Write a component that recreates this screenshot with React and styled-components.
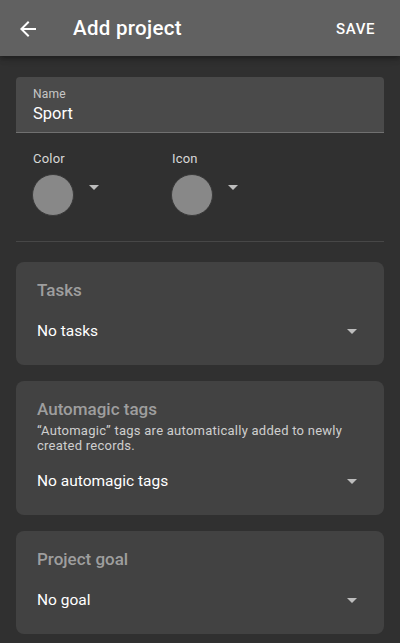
import React from "react";
import styled, { createGlobalStyle } from "styled-components";

const Global = createGlobalStyle`
  html, body { margin: 0; padding: 0; background: #303030; }
  body { font-family: Roboto, "Noto Sans", "Liberation Sans", sans-serif; -webkit-font-smoothing: antialiased; }
  * { box-sizing: border-box; }
`;

const Page = styled.div`
  width: 400px;
  min-height: 643px;
  background: #303030;
  color: #fff;
`;

const AppBar = styled.header`
  height: 56px;
  background: #616161;
  display: flex;
  align-items: center;
  padding: 0 25px 0 16px;
  box-shadow: 0 2px 4px -1px rgba(0,0,0,0.2), 0 4px 5px 0 rgba(0,0,0,0.14), 0 1px 10px 0 rgba(0,0,0,0.12);
  position: relative;
  z-index: 1;
`;

const IconButton = styled.button`
  width: 24px;
  height: 24px;
  padding: 0;
  border: 0;
  background: none;
  color: #fff;
  display: flex;
  align-items: center;
  justify-content: center;
  margin-top: 2px;
`;

const Title = styled.h1`
  margin: 0 0 0 33px;
  font-size: 20.5px;
  font-weight: 500;
  line-height: 24px;
  flex: 1;
  letter-spacing: 0.3px;
`;

const SaveButton = styled.button`
  border: 0;
  background: none;
  color: #fff;
  font-family: inherit;
  font-size: 15px;
  font-weight: 500;
  letter-spacing: 0.6px;
  padding: 0;
  margin-top: 2px;
`;

const Content = styled.main`
  padding: 21px 16px 16px;
  display: flex;
  flex-direction: column;
`;

const Field = styled.div`
  height: 56px;
  background: #4a4a4a;
  border-radius: 4px 4px 0 0;
  border-bottom: 1px solid #707070;
  padding: 9px 17px 0;
  display: flex;
  flex-direction: column;
`;

const FieldLabel = styled.label`
  font-size: 12px;
  line-height: 16px;
  color: rgba(255,255,255,0.7);
  letter-spacing: 0.2px;
`;

const FieldValue = styled.div`
  font-size: 16.5px;
  line-height: 22px;
  color: #fff;
  margin-top: 1px;
`;

const Pickers = styled.div`
  display: grid;
  grid-template-columns: 139px 139px;
  padding: 18px 0 0 16px;
`;

const Picker = styled.div`
  display: flex;
  flex-direction: column;
`;

const PickerLabel = styled.span`
  font-size: 13px;
  line-height: 16px;
  color: rgba(255,255,255,0.82);
  letter-spacing: 0.2px;
  margin-left: 1px;
`;

const PickerRow = styled.div`
  display: flex;
  align-items: flex-start;
  margin-top: 7px;
`;

const Swatch = styled.div`
  width: 42px;
  height: 42px;
  border-radius: 50%;
  background: #888888;
  border: 1px solid #3a3a3a;
`;

const Caret = styled.svg`
  width: 24px;
  height: 24px;
  flex: none;
  fill: ${p => p.$color || "#bdbdbd"};
`;

const PickerCaret = styled(Caret)`
  margin: 1px 0 0 ${p => p.$offset}px;
`;

const Divider = styled.hr`
  margin: 25px 0 20px;
  border: 0;
  height: 1px;
  background: #474747;
`;

const Cards = styled.div`
  display: flex;
  flex-direction: column;
  gap: 16px;
`;

const Card = styled.section`
  background: #424242;
  border-radius: 8px;
  padding: 16px 21px 22px;
  display: flex;
  flex-direction: column;
`;

const CardTitle = styled.h2`
  margin: 0;
  font-size: 17px;
  font-weight: 500;
  line-height: 24px;
  color: #9e9e9e;
`;

const CardDesc = styled.p`
  margin: 2px 0 0;
  font-size: 13px;
  line-height: 15px;
  color: rgba(255,255,255,0.75);
  letter-spacing: 0.25px;
`;

const SelectRow = styled.div`
  display: flex;
  align-items: center;
  justify-content: space-between;
  height: 24px;
  margin-top: ${p => p.$gap}px;
  font-size: 15.5px;
  color: #fff;
`;

const SelectCaret = styled(Caret)`
  margin-right: -1px;
`;

const ArrowDrop = ({ as: C = Caret, ...rest }) => (
  <C viewBox="0 0 24 24" {...rest}>
    <path d="M7 10l5 5 5-5z" />
  </C>
);

const BackIcon = () => (
  <svg width="24" height="24" viewBox="0 0 24 24" fill="#fff">
    <path d="M20 11H7.83l5.59-5.59L12 4l-8 8 8 8 1.41-1.41L7.83 13H20v-2z" />
  </svg>
);

const SelectCard = ({ title, desc, value, gap }) => (
  <Card>
    <CardTitle>{title}</CardTitle>
    {desc && <CardDesc>{desc}</CardDesc>}
    <SelectRow $gap={gap}>
      <span>{value}</span>
      <ArrowDrop as={SelectCaret} $color="#bdbdbd" />
    </SelectRow>
  </Card>
);

export default function App() {
  return (
    <Page>
      <Global />
      <AppBar>
        <IconButton aria-label="back"><BackIcon /></IconButton>
        <Title>Add project</Title>
        <SaveButton>SAVE</SaveButton>
      </AppBar>
      <Content>
        <Field>
          <FieldLabel>Name</FieldLabel>
          <FieldValue>Sport</FieldValue>
        </Field>
        <Pickers>
          <Picker>
            <PickerLabel>Color</PickerLabel>
            <PickerRow>
              <Swatch />
              <ArrowDrop as={PickerCaret} $offset={8} $color="#bdbdbd" />
            </PickerRow>
          </Picker>
          <Picker>
            <PickerLabel>Icon</PickerLabel>
            <PickerRow>
              <Swatch />
              <ArrowDrop as={PickerCaret} $offset={8} $color="#bdbdbd" />
            </PickerRow>
          </Picker>
        </Pickers>
        <Divider />
        <Cards>
          <SelectCard title="Tasks" value="No tasks" gap={17} />
          <SelectCard
            title="Automagic tags"
            desc="“Automagic” tags are automatically added to newly created records."
            value="No automagic tags"
            gap={16}
          />
          <SelectCard title="Project goal" value="No goal" gap={17} />
        </Cards>
      </Content>
    </Page>
  );
}
